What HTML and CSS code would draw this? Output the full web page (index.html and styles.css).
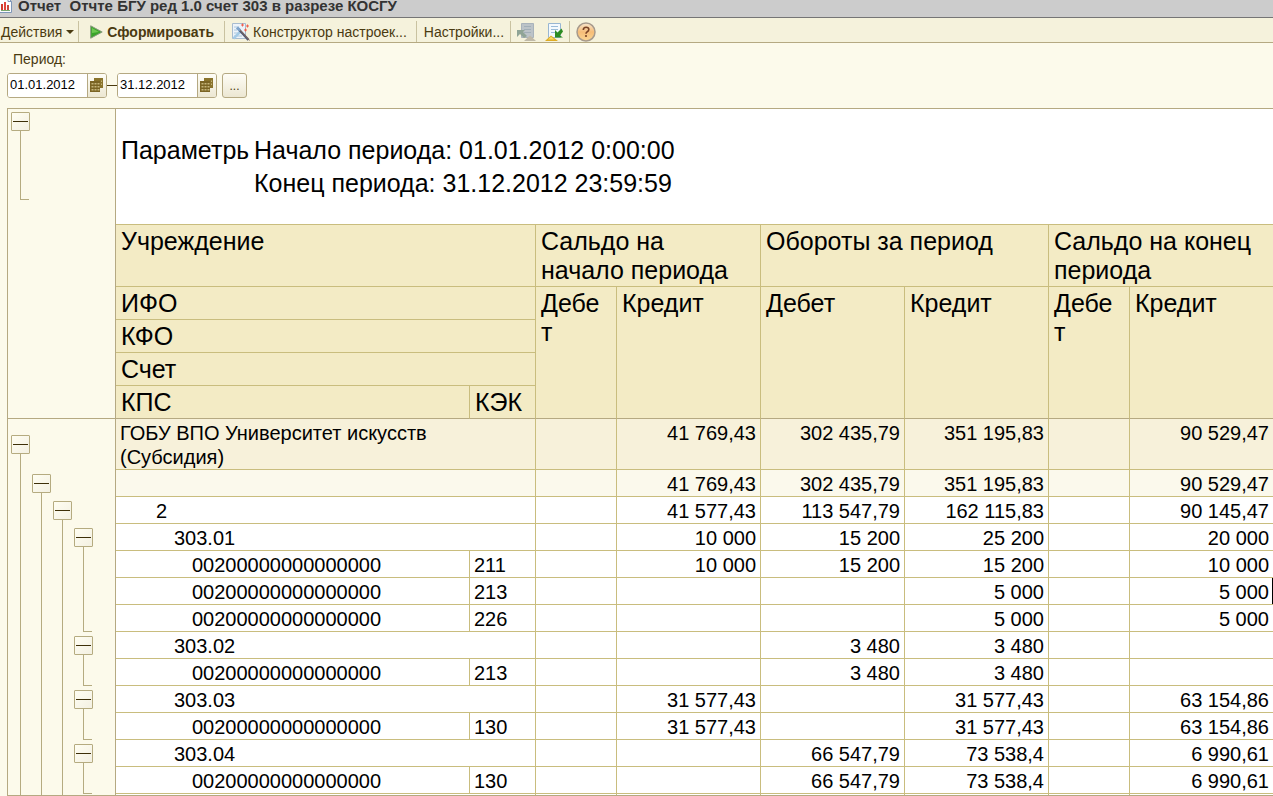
FILE: index.html
```html
<!DOCTYPE html>
<html lang="ru">
<head>
<meta charset="utf-8">
<title>Отчет</title>
<link rel="stylesheet" href="styles.css">
</head>
<body>
<header class="titlebar">
  <svg class="title-icon" width="12" height="13" viewBox="0 0 12 13" aria-hidden="true">
    <path d="M-2-2h10l3.500 3.500v11H-2z" fill="#fbfcfe" stroke="#7f97b8"/>
    <path d="M8-1v2.500h3.500" fill="none" stroke="#7f97b8"/>
    <path d="M1 4h2v6H1z" fill="#d23a2e"/><path d="M4 2h2v8H4z" fill="#e0433a"/><path d="M7 5h2v5H7z" fill="#c9463c"/>
    <path d="M1 10.500h9" stroke="#7aa86e"/>
  </svg>
  <h1>Отчет&nbsp; Отчте БГУ ред 1.0 счет 303 в разрезе КОСГУ</h1>
</header>

<nav class="toolbar">
  <button class="tool actions">Действия <span class="caret"></span></button>
  <button class="tool run">
    <svg width="13" height="14" viewBox="0 0 13 14" aria-hidden="true"><path d="M.7.800l11.500 6.200-11.500 6.200z" fill="#3aa42a" stroke="#8a9a80"/><path d="M2 3l7 4-7 1z" fill="#6cc850"/></svg>
    Сформировать</button>
  <button class="tool builder">
    <svg width="19" height="19" viewBox="0 0 19 19" aria-hidden="true">
      <path d="M.5 1.500h13v15H.5z" fill="#edf3f9" stroke="#a8bccf"/>
      <path d="M2 5h5M2 8h3M2 11h5M2 14h8" stroke="#a9c8e0"/>
      <path d="M1.500 16.500L9 9" stroke="#a5cbe6" stroke-width="2.500"/>
      <path d="M6.500 7l10 11" stroke="#4f5874" stroke-width="2.500"/>
      <path d="M8 8l9.500 10.500" stroke="#8a6a58"/>
      <path d="M5 5.500l3 3" stroke="#7ea4cc" stroke-width="3"/>
      <path d="M9 3h3M10.500 1.500v3M14 4h3M15.500 2.500v3M12 8h3M13.500 6.500v3" stroke="#f0604e"/>
    </svg>
    Конструктор настроек...</button>
  <button class="tool settings">Настройки...</button>
  <div class="tool icons">
    <button aria-label="Восстановить настройки" disabled>
      <svg width="20" height="20" viewBox="0 0 20 20" aria-hidden="true">
        <path d="M4.500 1.500h12v14h-12z" fill="#bcc3c8" stroke="#a9b3bb"/>
        <path d="M7 4.500h7M7 7.500h7M7 10.500h7" stroke="#a2afb8"/>
        <path d="M0 8h8L6 10l4 4-3 2-4-4-3 3z" fill="#8fa496"/>
        <path d="M7 19l6-5.500 6 5.500z" fill="#bfb9a8"/>
      </svg>
    </button>
    <button aria-label="Сохранить настройки">
      <svg width="20" height="20" viewBox="0 0 20 20" aria-hidden="true">
        <path d="M3.500 1.500h12v14h-12z" fill="#f4f9fd" stroke="#98b6d2"/>
        <path d="M6 4.500h7M6 7.500h7M6 10.500h5" stroke="#9bbcd9"/>
        <path d="M18 15.500h-8V8l2.500 2.500 4-4 1.500 3-3 4z" fill="#2c8c22"/>
        <path d="M0 19l6-5.500 7 5.500z" fill="#dfac24"/><path d="M3 17.500l3-2.800 3.500 2.800z" fill="#f7dc6a"/>
      </svg>
    </button>
  </div>
  <button class="tool help" aria-label="Справка">
    <svg width="20" height="20" viewBox="0 0 20 20" aria-hidden="true">
      <defs><linearGradient id="orb" x2="0" y2="1"><stop offset="0" stop-color="#f8e6cf"/><stop offset=".5" stop-color="#f6bd78"/><stop offset="1" stop-color="#fbd694"/></linearGradient></defs>
      <circle cx="10" cy="10" r="9" fill="url(#orb)" stroke="#a79a8c" stroke-width="1.500"/>
      <path d="M7.300 8q0-2.800 2.800-2.800t2.700 2.300q0 1.500-1.500 2.200-1.300.7-1.300 2" fill="none" stroke="#7a4326" stroke-width="1.600"/>
      <circle cx="10" cy="14" r="1.100" fill="#7a4326"/>
    </svg>
  </button>
</nav>

<form class="period">
  <label for="from">Период:</label>
  <div class="dates">
    <span class="date"><input id="from" value="01.01.2012"><button type="button" aria-label="Выбрать дату начала"><svg width="14" height="15" viewBox="0 0 14 15" aria-hidden="true"><path d="M4 0h9v10H4z" fill="#8a742c"/><path d="M0 3h10v11H0z" fill="#7a6424"/><path d="M1.500 5h2v1.500h-2zM4.500 5h2v1.500h-2zM7.500 5h2v1.500h-2zM1.500 8h2v1.500h-2zM4.500 8h2v1.500h-2zM7.500 8h2v1.500h-2zM1.500 11h2v1.500h-2zM4.500 11h2v1.500h-2zM7.500 11h2v1.500h-2zM11 2.500h1v1.500h-1zM11 5.500h1v1.500h-1z" fill="#c4b47a"/></svg></button></span>
    <span class="dash"></span>
    <span class="date"><input aria-label="Конец периода" value="31.12.2012"><button type="button" aria-label="Выбрать дату конца"><svg width="14" height="15" viewBox="0 0 14 15" aria-hidden="true"><path d="M4 0h9v10H4z" fill="#8a742c"/><path d="M0 3h10v11H0z" fill="#7a6424"/><path d="M1.500 5h2v1.500h-2zM4.500 5h2v1.500h-2zM7.500 5h2v1.500h-2zM1.500 8h2v1.500h-2zM4.500 8h2v1.500h-2zM7.500 8h2v1.500h-2zM1.500 11h2v1.500h-2zM4.500 11h2v1.500h-2zM7.500 11h2v1.500h-2zM11 2.500h1v1.500h-1zM11 5.500h1v1.500h-1z" fill="#c4b47a"/></svg></button></span>
    <button type="button" class="more">...</button>
  </div>
</form>

<main class="report">
<table>
  <colgroup><col class="c-tree"><col class="c-name"><col class="c-kek"><col class="c-thin"><col class="c-sum"><col class="c-sum"><col class="c-sum"><col class="c-thin"><col></colgroup>
  <thead>
    <tr class="pad"><td class="tree"><div class="lanes"><i class="node"><button aria-label="Свернуть"></button></i></div></td><td colspan="8"></td></tr>
    <tr class="param"><td class="tree"><div class="lanes"><i class="line"></i></div></td><td colspan="8"><div class="pair"><span class="key">Параметры</span><span>Начало периода: 01.01.2012 0:00:00</span></div></td></tr>
    <tr class="param"><td class="tree"><div class="lanes"><i class="line end"></i></div></td><td colspan="8"><div class="pair"><span class="key"></span><span>Конец периода: 31.12.2012 23:59:59</span></div></td></tr>
    <tr class="pad last"><td class="tree"></td><td colspan="8"></td></tr>
    <tr class="head tall"><td class="tree sep" rowspan="5"></td><th colspan="2">Учреждение</th><th colspan="2">Сальдо на начало периода</th><th colspan="2">Обороты за период</th><th class="edge" colspan="2">Сальдо на конец периода</th></tr>
    <tr class="head"><th colspan="2">ИФО</th><th class="sep" rowspan="4">Дебет</th><th class="sep" rowspan="4">Кредит</th><th class="sep" rowspan="4">Дебет</th><th class="sep" rowspan="4">Кредит</th><th class="sep" rowspan="4">Дебет</th><th class="sep edge" rowspan="4">Кредит</th></tr>
    <tr class="head"><th colspan="2">КФО</th></tr>
    <tr class="head"><th colspan="2">Счет</th></tr>
    <tr class="head"><th class="sep">КПС</th><th class="sep">КЭК</th></tr>
  </thead>
  <tbody>
    <tr class="org"><td class="tree"><div class="lanes"><i class="node"><button aria-label="Свернуть"></button></i></div></td><td colspan="2">ГОБУ ВПО Университет искусств<br>(Субсидия)</td><td></td><td class="num">41 769,43</td><td class="num">302 435,79</td><td class="num">351 195,83</td><td></td><td class="num">90 529,47</td></tr>
    <tr class="ifo"><td class="tree"><div class="lanes"><i class="line"></i><i class="node"><button aria-label="Свернуть"></button></i></div></td><td colspan="2"></td><td></td><td class="num">41 769,43</td><td class="num">302 435,79</td><td class="num">351 195,83</td><td></td><td class="num">90 529,47</td></tr>
    <tr><td class="tree"><div class="lanes"><i class="line"></i><i class="line"></i><i class="node"><button aria-label="Свернуть"></button></i></div></td><td class="lvl2" colspan="2">2</td><td></td><td class="num">41 577,43</td><td class="num">113 547,79</td><td class="num">162 115,83</td><td></td><td class="num">90 145,47</td></tr>
    <tr><td class="tree"><div class="lanes"><i class="line"></i><i class="line"></i><i class="line"></i><i class="node"><button aria-label="Свернуть"></button></i></div></td><td class="lvl3" colspan="2">303.01</td><td></td><td class="num">10 000</td><td class="num">15 200</td><td class="num">25 200</td><td></td><td class="num">20 000</td></tr>
    <tr><td class="tree"><div class="lanes"><i class="line"></i><i class="line"></i><i class="line"></i><i class="line"></i></div></td><td class="lvl4">00200000000000000</td><td>211</td><td></td><td class="num">10 000</td><td class="num">15 200</td><td class="num">15 200</td><td></td><td class="num">10 000</td></tr>
    <tr><td class="tree"><div class="lanes"><i class="line"></i><i class="line"></i><i class="line"></i><i class="line"></i></div></td><td class="lvl4">00200000000000000</td><td>213</td><td></td><td></td><td></td><td class="num">5 000</td><td></td><td class="num current">5 000</td></tr>
    <tr><td class="tree"><div class="lanes"><i class="line"></i><i class="line"></i><i class="line"></i><i class="line end"></i></div></td><td class="lvl4">00200000000000000</td><td>226</td><td></td><td></td><td></td><td class="num">5 000</td><td></td><td class="num">5 000</td></tr>
    <tr><td class="tree"><div class="lanes"><i class="line"></i><i class="line"></i><i class="line"></i><i class="node"><button aria-label="Свернуть"></button></i></div></td><td class="lvl3" colspan="2">303.02</td><td></td><td></td><td class="num">3 480</td><td class="num">3 480</td><td></td><td></td></tr>
    <tr><td class="tree"><div class="lanes"><i class="line"></i><i class="line"></i><i class="line"></i><i class="line end"></i></div></td><td class="lvl4">00200000000000000</td><td>213</td><td></td><td></td><td class="num">3 480</td><td class="num">3 480</td><td></td><td></td></tr>
    <tr><td class="tree"><div class="lanes"><i class="line"></i><i class="line"></i><i class="line"></i><i class="node"><button aria-label="Свернуть"></button></i></div></td><td class="lvl3" colspan="2">303.03</td><td></td><td class="num">31 577,43</td><td></td><td class="num">31 577,43</td><td></td><td class="num">63 154,86</td></tr>
    <tr><td class="tree"><div class="lanes"><i class="line"></i><i class="line"></i><i class="line"></i><i class="line end"></i></div></td><td class="lvl4">00200000000000000</td><td>130</td><td></td><td class="num">31 577,43</td><td></td><td class="num">31 577,43</td><td></td><td class="num">63 154,86</td></tr>
    <tr><td class="tree"><div class="lanes"><i class="line"></i><i class="line"></i><i class="line"></i><i class="node"><button aria-label="Свернуть"></button></i></div></td><td class="lvl3" colspan="2">303.04</td><td></td><td></td><td class="num">66 547,79</td><td class="num">73 538,4</td><td></td><td class="num">6 990,61</td></tr>
    <tr><td class="tree"><div class="lanes"><i class="line"></i><i class="line"></i><i class="line"></i><i class="line end"></i></div></td><td class="lvl4">00200000000000000</td><td>130</td><td></td><td></td><td class="num">66 547,79</td><td class="num">73 538,4</td><td></td><td class="num">6 990,61</td></tr>
    <tr><td class="tree"><div class="lanes"><i class="line"></i><i class="line"></i><i class="line"></i></div></td><td colspan="2"></td><td></td><td></td><td></td><td></td><td></td><td></td></tr>
  </tbody>
</table>
</main>
</body>
</html>
```
FILE: styles.css
```css
* { box-sizing: border-box; }

:root {
  --paper: #fcfaeb;
  --frame: #b5a982;
  --grid: #c9bd7e;
  --ink: #4a3a10;
}

body {
  margin: 0;
  height: 100vh;
  display: flex;
  flex-direction: column;
  overflow: hidden;
  background: var(--paper);
  font: 14px/16px "Liberation Sans", Arial, sans-serif;
  color: var(--ink);
}

button { font: inherit; color: inherit; padding: 0; border: 0; background: none; }
svg { display: block; flex: none; }

/* Window caption */
.titlebar {
  display: flex;
  align-items: flex-start;
  gap: 6px;
  height: 18px;
  flex: none;
  background: #ccc;
  border-bottom: 1px solid #757575;
}
.titlebar h1 {
  margin: 0;
  font-size: 15px;
  line-height: 12px;
  color: #333;
  white-space: nowrap;
}

/* Command bar */
.toolbar {
  display: flex;
  align-items: stretch;
  height: 25px;
  padding-top: 3px;
  flex: none;
  background: #f5f2dc;
  border-bottom: 1px solid var(--frame);
}
.tool {
  display: flex;
  align-items: center;
  gap: 4px;
  white-space: nowrap;
  border-right: 1px solid #c9c2a0;
}
.actions { padding: 0 4px 0 1px; }
.run { font-weight: bold; padding: 0 10px 0 11px; }
.builder { gap: 2px; padding: 0 9px 0 7px; }
.settings { padding: 0 6px 0 7px; }
.icons { gap: 8px; padding: 0 4px 0 6px; }
.help { border: 0; padding: 0 6px; }
.caret { border: 4px solid transparent; border-top-color: var(--ink); border-bottom: 0; }

/* Period selector */
.period { flex: none; padding: 8px 7px 10px; }
.period label { display: block; padding-left: 6px; }
.dates { display: flex; align-items: center; margin-top: 6px; }
.date {
  display: flex;
  width: 100px;
  height: 25px;
  border: 1px solid var(--frame);
  border-radius: 3px;
  overflow: hidden;
  background: #fff;
}
.date input {
  flex: 1;
  min-width: 0;
  border: 0;
  padding: 0 2px 2px;
  font: inherit;
  font-size: 13px;
  color: #000;
  outline: 0;
}
.date button {
  display: flex;
  align-items: center;
  justify-content: center;
  width: 19px;
  border-left: 1px solid var(--frame);
  background: linear-gradient(#fefdf6, #ece7d2);
}
.dash { width: 10px; height: 1px; background: var(--ink); }
.more {
  width: 25px;
  height: 25px;
  margin-left: 5px;
  border: 1px solid var(--frame);
  border-radius: 3px;
  background: linear-gradient(#fefdf6, #ece7d2);
  font-size: 12px;
}

/* Spreadsheet */
.report {
  flex: 1;
  min-height: 0;
  margin-left: 7px;
  overflow: hidden;
  border-top: 1px solid var(--frame);
  border-bottom: 1px solid var(--frame);
}
table {
  width: 100%;
  table-layout: fixed;
  border-collapse: separate;
  border-spacing: 0;
  color: #000;
}
.c-tree { width: 109px; }
.c-name { width: 354px; }
.c-kek { width: 66px; }
.c-thin { width: 81px; }
.c-sum { width: 144px; }

td, th {
  height: 27px;
  padding: 2px 4px 0;
  vertical-align: top;
  text-align: left;
  font-size: 20px;
  line-height: 24px;
  font-weight: normal;
  background: #fff;
  border-right: 1px solid var(--grid);
  border-bottom: 1px solid var(--grid);
}
td:last-child, .edge { border-right: 0; }
.num { text-align: right; }
.lvl2 { padding-left: 40px; }
.lvl3 { padding-left: 58px; }
.lvl4 { padding-left: 76px; }
.current { box-shadow: inset -1px 0 #000; }

.head th {
  height: 33px;
  padding: 2px 10px 0 5px;
  font-size: 25px;
  line-height: 29px;
  overflow-wrap: anywhere;
  background: #f3ebc5;
}
.head.tall th { height: 62px; }
.org td { height: 51px; background: #f7f1da; }
.ifo td { background: #fbf9ec; }

.pad td { height: 25px; }
.param td { height: 33px; padding: 2px 5px 0; font-size: 25px; line-height: 29px; }
.pad td, .param td { border: 0; }
.pad.last td { border-bottom: 1px solid var(--grid); }
.pair { display: flex; gap: 5px; white-space: nowrap; }
.key { width: 128px; flex: none; overflow: hidden; }

/* Grouping tree */
tr .tree {
  padding: 0 0 0 2px;
  border: 0;
  border-left: 1px solid var(--frame);
  border-right: 1px solid var(--frame);
  background: var(--paper);
}
.pad.last .tree { border-bottom: 0; }
tr .sep, tr .tree.sep { border-bottom: 1px solid var(--frame); }
.lanes { display: flex; height: 100%; }
.lanes i { width: 21px; display: flex; flex-direction: column; align-items: center; }
.line { background: linear-gradient(#b5ab80, #b5ab80) 10px 0 / 1px 100% no-repeat; }
.line.end {
  background:
    linear-gradient(#b5ab80, #b5ab80) 10px 0 / 1px 100% no-repeat,
    linear-gradient(#b5ab80, #b5ab80) 10px 100% / 9px 1px no-repeat;
}
.node::before, .node::after { content: ""; flex: 1; width: 1px; }
.node::after { background: #b5ab80; }
.node button {
  width: 19px;
  height: 19px;
  flex: none;
  border: 1px solid #b5ab80;
  border-radius: 1px;
  background:
    linear-gradient(#3d2f08, #3d2f08) center / 15px 1px no-repeat,
    linear-gradient(135deg, #fffef2, #f3f0e2);
}
```
